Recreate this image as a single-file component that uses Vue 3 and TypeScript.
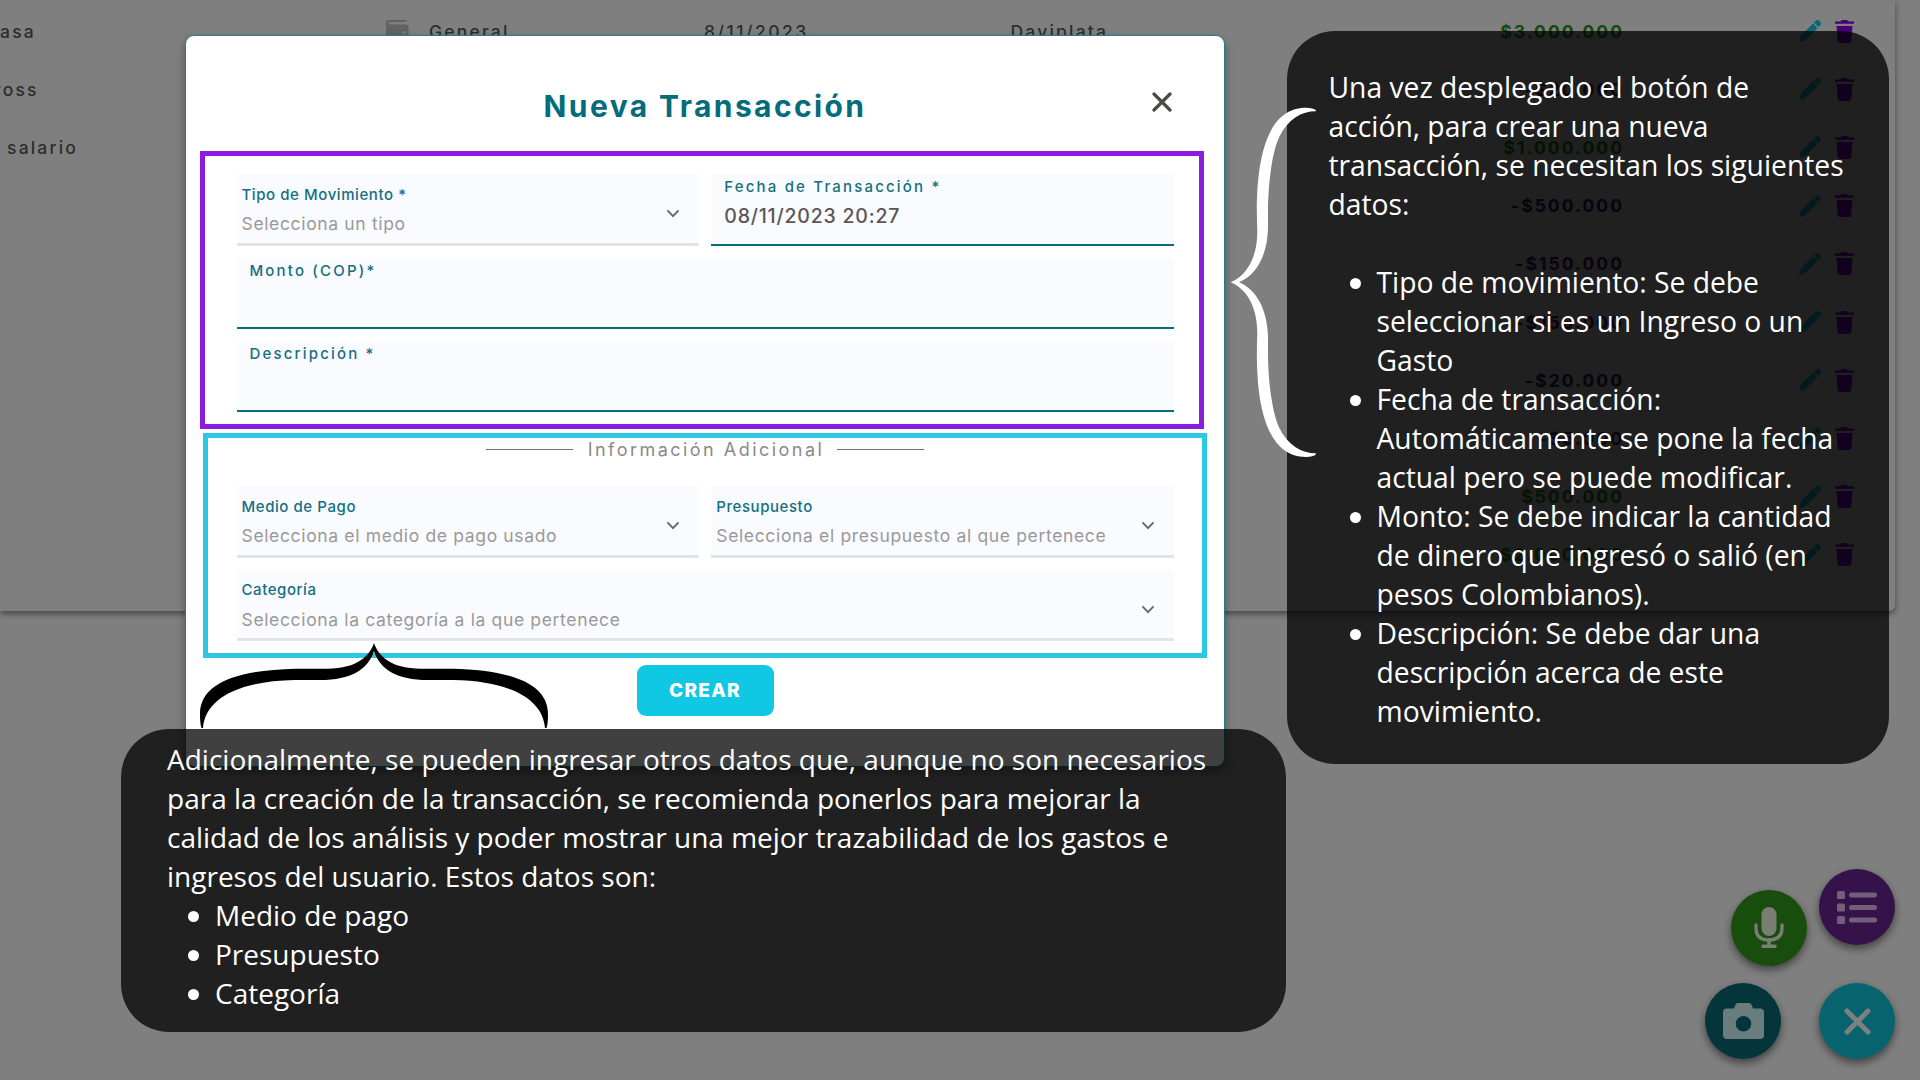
<script setup lang="ts">
interface Row {
  name: string
  amount: string
  kind: 'in' | 'out'
}

const rows: Row[] = [
  { name: 'asa', amount: '$3.000.000', kind: 'in' },
  { name: 'ross', amount: '-$20.000', kind: 'out' },
  { name: 'salario', amount: '$1.000.000', kind: 'in' },
  { name: '', amount: '-$500.000', kind: 'out' },
  { name: '', amount: '-$150.000', kind: 'out' },
  { name: '', amount: '-$150.000', kind: 'out' },
  { name: '', amount: '-$20.000', kind: 'out' },
  { name: '', amount: '-$5.000', kind: 'out' },
  { name: '', amount: '$500.000', kind: 'in' },
  { name: '', amount: '$2.000.000', kind: 'in' },
]

const required: string[] = [
  'Tipo de movimiento: Se debe seleccionar si es un Ingreso o un Gasto',
  'Fecha de transacción: Automáticamente se pone la fecha actual pero se puede modificar.',
  'Monto: Se debe indicar la cantidad de dinero que ingresó o salió (en pesos Colombianos).',
  'Descripción: Se debe dar una descripción acerca de este movimiento.',
]

const optional: string[] = ['Medio de pago', 'Presupuesto', 'Categoría']
</script>

<template>
  <div class="screen">
    <section class="table">
      <div v-for="(row, i) in rows" :key="i" class="row">
        <span class="name" :class="'n' + i">{{ row.name }}</span>
        <span class="wallet">
          <svg v-if="i === 0" width="23" height="22" viewBox="0 0 23 22">
            <path d="M3 0H19Q21 0 21 2H4Q2.500 2 2.500 3.300Q2.500 4.600 4 4.600H20Q22.500 4.600 22.500 7V19Q22.500 22 19.500 22H3Q0 22 0 19V3Q0 0 3 0Z" fill="#c4c4c4" />
            <circle cx="18" cy="12.500" r="1.600" fill="#fff" />
          </svg>
        </span>
        <span class="budget">{{ i === 0 ? 'General' : '' }}</span>
        <span class="date">{{ i === 0 ? '8/11/2023' : '' }}</span>
        <span class="method">{{ i === 0 ? 'Daviplata' : '' }}</span>
        <span class="amount" :class="row.kind">{{ row.amount }}</span>
        <svg class="pencil" width="22" height="22" viewBox="0 0 22 22" fill="#0ccfe6">
          <path d="M15 2.500L19.500 7L21 5.500Q22.800 3.500 21 1.500L20.500 1Q18.500 -.8 16.500 1Z" />
          <path d="M14 3.500L18.500 8L7.500 19Q6 20.500 4 21L0 22L1 18Q1.500 16 3 14.500Z" />
        </svg>
        <svg class="trash" width="19" height="23" viewBox="0 0 19 23" fill="#9000f4">
          <path d="M0 1.500H5.500Q6 0 7.500 0H11.500Q13 0 13.500 1.500H19V3.800H0Z" />
          <path d="M1.500 6H17.500L16.300 20.500Q16 23 14 23H5Q3 23 2.700 20.500Z" />
        </svg>
      </div>
    </section>

    <div class="fab mic">
      <svg width="30" height="42" viewBox="0 0 30 42">
        <rect x="7.500" y="0" width="15" height="29" rx="7.500" fill="#f0ffe4" />
        <path d="M2 18V21Q2 33 15 33Q28 33 28 21V18" fill="none" stroke="#f0ffe4" stroke-width="3.400" stroke-linecap="round" />
        <path d="M15 33V38M9 39.300H21" fill="none" stroke="#f0ffe4" stroke-width="3.600" stroke-linecap="round" />
      </svg>
    </div>
    <div class="fab list">
      <svg width="40" height="33" viewBox="0 0 40 33" fill="#e6bdf8">
        <rect x="0" y="0" width="8" height="8" rx="1.500" />
        <rect x="0" y="12.500" width="8" height="8" rx="1.500" />
        <rect x="0" y="25" width="8" height="8" rx="1.500" />
        <rect x="12" y="1.400" width="28" height="5.200" rx="2.500" />
        <rect x="12" y="13.900" width="28" height="5.200" rx="2.500" />
        <rect x="12" y="26.400" width="28" height="5.200" rx="2.500" />
      </svg>
    </div>
    <div class="fab camera">
      <svg width="41" height="36" viewBox="0 0 41 36">
        <path fill-rule="evenodd" fill="#d6f8ff" d="M4 5.500H11L12.300 2Q13 0 15 0H26Q28 0 28.700 2L30 5.500H37Q41 5.500 41 9.500V32Q41 36 37 36H4Q0 36 0 32V9.500Q0 5.500 4 5.500ZM20.500 13A7.800 7.800 0 1 0 20.500 28.600A7.800 7.800 0 1 0 20.500 13Z" />
      </svg>
    </div>
    <div class="fab toggle">
      <svg width="27" height="27" viewBox="0 0 27 27">
        <path d="M3 3L24 24M24 3L3 24" stroke="#fff" stroke-width="5" stroke-linecap="round" />
      </svg>
    </div>

    <div class="backdrop"></div>

    <section class="modal">
      <header class="modal-head">
        <h1>Nueva Transacción</h1>
        <svg class="close" width="20" height="20" viewBox="0 0 20 20">
          <path d="M2 2L18 18M18 2L2 18" stroke="#4c4a48" stroke-width="3.200" stroke-linecap="round" />
        </svg>
      </header>

      <div class="frame required">
        <div class="pair">
          <div class="field select">
            <div>
              <div class="label">Tipo de Movimiento *</div>
              <div class="placeholder">Selecciona un tipo</div>
            </div>
            <svg class="chevron" width="14" height="9" viewBox="0 0 14 9"><path d="M1.500 1.300L7 7.200L12.500 1.300" /></svg>
          </div>
          <div class="field input">
            <div class="label">Fecha de Transacción *</div>
            <div class="value">08/11/2023 20:27</div>
          </div>
        </div>
        <div class="field input wide"><div class="label">Monto (COP)*</div></div>
        <div class="field input wide"><div class="label">Descripción *</div></div>
      </div>

      <div class="frame extra">
        <div class="divider"><i></i><span>Información Adicional</span><i></i></div>
        <div class="pair">
          <div class="field select">
            <div>
              <div class="label">Medio de Pago</div>
              <div class="placeholder">Selecciona el medio de pago usado</div>
            </div>
            <svg class="chevron" width="14" height="9" viewBox="0 0 14 9"><path d="M1.500 1.300L7 7.200L12.500 1.300" /></svg>
          </div>
          <div class="field select">
            <div>
              <div class="label">Presupuesto</div>
              <div class="placeholder">Selecciona el presupuesto al que pertenece</div>
            </div>
            <svg class="chevron" width="14" height="9" viewBox="0 0 14 9"><path d="M1.500 1.300L7 7.200L12.500 1.300" /></svg>
          </div>
        </div>
        <div class="field select">
          <div>
            <div class="label">Categoría</div>
            <div class="placeholder">Selecciona la categoría a la que pertenece</div>
          </div>
          <svg class="chevron" width="14" height="9" viewBox="0 0 14 9"><path d="M1.500 1.300L7 7.200L12.500 1.300" /></svg>
        </div>
      </div>

      <button class="create">CREAR</button>
    </section>

    <aside class="note side">
      <p>Una vez desplegado el botón de acción, para crear una nueva transacción, se necesitan los siguientes datos:</p>
      <ul>
        <li v-for="item in required" :key="item">{{ item }}</li>
      </ul>
    </aside>

    <aside class="note bottom">
      <p>Adicionalmente, se pueden ingresar otros datos que, aunque no son necesarios para la creación de la transacción, se recomienda ponerlos para mejorar la calidad de los análisis y poder mostrar una mejor trazabilidad de los gastos e ingresos del usuario. Estos datos son:</p>
      <ul>
        <li v-for="item in optional" :key="item">{{ item }}</li>
      </ul>
    </aside>

    <svg class="brace-side" width="110" height="374.667" viewBox="0 0 330 1124">
      <path fill="#fff" d="M32 562C85 540 112 480 112 410C105 250 120 38 258 38Q280 38 288 46L287 49C245 49 205 72 178 125C152 180 144 290 144 350V400C142 480 110 540 57 562C110 584 142 644 144 724V774C144 834 152 944 178 999C205 1052 245 1075 287 1075L288 1078Q280 1086 258 1086C120 1086 105 874 112 714C112 644 85 584 32 562Z" />
    </svg>
    <svg class="brace-bottom" width="352" height="88" viewBox="198 642 352 88">
      <path d="M374 643C370 655 358 669 326 668.700H295C245 670 200 680 200 714Q200 724 201.500 728H203C205 700 236 681 295 680H318C350 680.500 368 670 374 651C380 670 398 680.500 430 680H453C512 681 543 700 545 728H546.500Q548 724 548 714C548 680 503 670 453 668.700H422C390 669 378 655 374 643Z" />
    </svg>
  </div>
</template>

<style>
body {
  margin: 0;
  overflow: hidden;
}
</style>

<style scoped>
.screen {
  position: relative;
  width: 1920px;
  height: 1080px;
  overflow: hidden;
  background: #fff;
  font-family: Inter, "Open Sans", sans-serif;
}

.table {
  box-sizing: border-box;
  width: 1895px;
  height: 611px;
  padding-top: 2px;
  border-radius: 0 0 6px 0;
  box-shadow: 0 3px 6px rgba(0, 0, 0, 0.45);
}

.row {
  display: grid;
  grid-template-columns: 386px 43px 275px 306.500px 362px 249.500px 199px 32.500px;
  align-items: center;
  height: 58.200px;
  font-size: 17.500px;
  font-weight: 500;
  letter-spacing: 2.200px;
  color: #5a5a5a;
  white-space: nowrap;
}

.n1 {
  margin-left: -6px;
}

.n2 {
  margin-left: 7px;
}

.wallet svg {
  display: block;
}

.date {
  letter-spacing: 2.500px;
}

.amount {
  justify-self: end;
  margin-right: -2px;
  font-weight: 700;
  letter-spacing: 2.050px;
}

.in {
  color: #239a12;
}

.out {
  color: #4a1a80;
}

.pencil,
.trash {
  justify-self: end;
}

.fab {
  position: absolute;
  display: flex;
  align-items: center;
  justify-content: center;
  width: 76px;
  height: 76px;
  border-radius: 50%;
  box-shadow: 0 4px 8px rgba(0, 0, 0, 0.5);
}

.mic {
  left: 1730.500px;
  top: 889.500px;
  background: #329a1a;
}

.list {
  left: 1819px;
  top: 869px;
  background: #6a2494;
}

.camera {
  left: 1705.300px;
  top: 983.300px;
  background: #066a76;
}

.toggle {
  left: 1819px;
  top: 983.300px;
  background: #0ec8de;
}

.backdrop {
  position: absolute;
  inset: 0;
  background: rgba(0, 0, 0, 0.5);
}

.modal {
  position: absolute;
  left: 185px;
  top: 35px;
  box-sizing: border-box;
  width: 1040px;
  height: 732px;
  border: 1px solid #257c86;
  border-radius: 9px;
  background: #fff;
  box-shadow: 0 4px 8px rgba(0, 0, 0, 0.35);
}

.modal-head {
  display: grid;
  grid-template-columns: 1fr auto 1fr;
  height: 115px;
}

h1 {
  grid-column: 2;
  margin: 49.500px 0 0;
  font-size: 30px;
  line-height: 40px;
  font-weight: 700;
  letter-spacing: 2.400px;
  color: #046c7a;
}

.close {
  justify-self: end;
  margin: 56px 52.500px 0 0;
}

.frame {
  box-sizing: border-box;
  display: flex;
  flex-direction: column;
  width: 1004px;
  border: 5px solid;
}

.required {
  height: 278px;
  margin-left: 14px;
  padding: 18px 25.500px 0 31.500px;
  border-color: #8b1bdf;
}

.extra {
  height: 225px;
  margin: 4px 0 0 17px;
  padding: 0 28.500px;
  border-color: #2cc8e2;
}

.pair {
  display: grid;
  grid-template-columns: 1fr 1fr;
  gap: 12.500px;
}

.pair,
.wide {
  margin-bottom: 12px;
}

.field {
  box-sizing: border-box;
  height: 71.500px;
  background: #fafbff;
}

.select {
  display: flex;
  justify-content: space-between;
  padding: 8.500px 18.500px 0 5px;
  border-bottom: 3px solid #e3e4e7;
}

.input {
  padding: 1.200px 12.500px 0 13px;
  border-bottom: 2.500px solid #086c7a;
}

.label {
  font-size: 15px;
  line-height: 24px;
  font-weight: 500;
  letter-spacing: 0.570px;
  color: #146f80;
  white-space: nowrap;
}

.input .label {
  letter-spacing: 2.180px;
}

.placeholder {
  margin-top: 4.500px;
  font-size: 17.500px;
  line-height: 26px;
  letter-spacing: 0.650px;
  color: #999;
  white-space: nowrap;
}

.value {
  margin-top: 3px;
  font-size: 19.500px;
  line-height: 28px;
  font-weight: 500;
  letter-spacing: 0.800px;
  color: #5b5654;
}

.chevron {
  margin-top: 26.500px;
  fill: none;
  stroke: #666;
  stroke-width: 1.800;
}

.divider {
  display: flex;
  align-items: center;
  justify-content: center;
  gap: 15px;
  height: 22px;
  margin-bottom: 26px;
  font-size: 18px;
  letter-spacing: 2.470px;
  color: #8a8a8a;
}

.divider i {
  width: 87px;
  height: 1px;
  background: #707070;
}

.divider span {
  margin-right: -2px;
}

.create {
  display: block;
  width: 137px;
  height: 51px;
  margin: 7px auto 0;
  padding: 0;
  border: 0;
  border-radius: 9px;
  background: #10c8e3;
  color: #fff;
  font: 800 19px Inter, sans-serif;
  letter-spacing: 1.300px;
}

.note {
  position: absolute;
  box-sizing: border-box;
  border-radius: 48px;
  background: rgba(0, 0, 0, 0.75);
  color: #fff;
  font: 28px/39px "Open Sans", sans-serif;
}

.note p {
  margin: 0;
}

.note ul {
  margin: 0;
  padding: 0 0 0 48px;
  list-style: none;
}

.note li {
  position: relative;
}

.note li::before {
  content: "";
  position: absolute;
  left: -27px;
  top: 15px;
  width: 11px;
  height: 11px;
  border-radius: 50%;
  background: #fff;
}

.side {
  left: 1286.500px;
  top: 31px;
  width: 602.500px;
  height: 733px;
  padding: 37px 42px 0 42px;
  font-size: 28.250px;
}

.side ul {
  margin-top: 39px;
}

.bottom {
  left: 121px;
  top: 729px;
  width: 1165px;
  height: 303px;
  padding: 11px 60px 0 46px;
}

.brace-side {
  position: absolute;
  left: 1220px;
  top: 95px;
}

.brace-bottom {
  position: absolute;
  left: 198px;
  top: 642px;
}
</style>
